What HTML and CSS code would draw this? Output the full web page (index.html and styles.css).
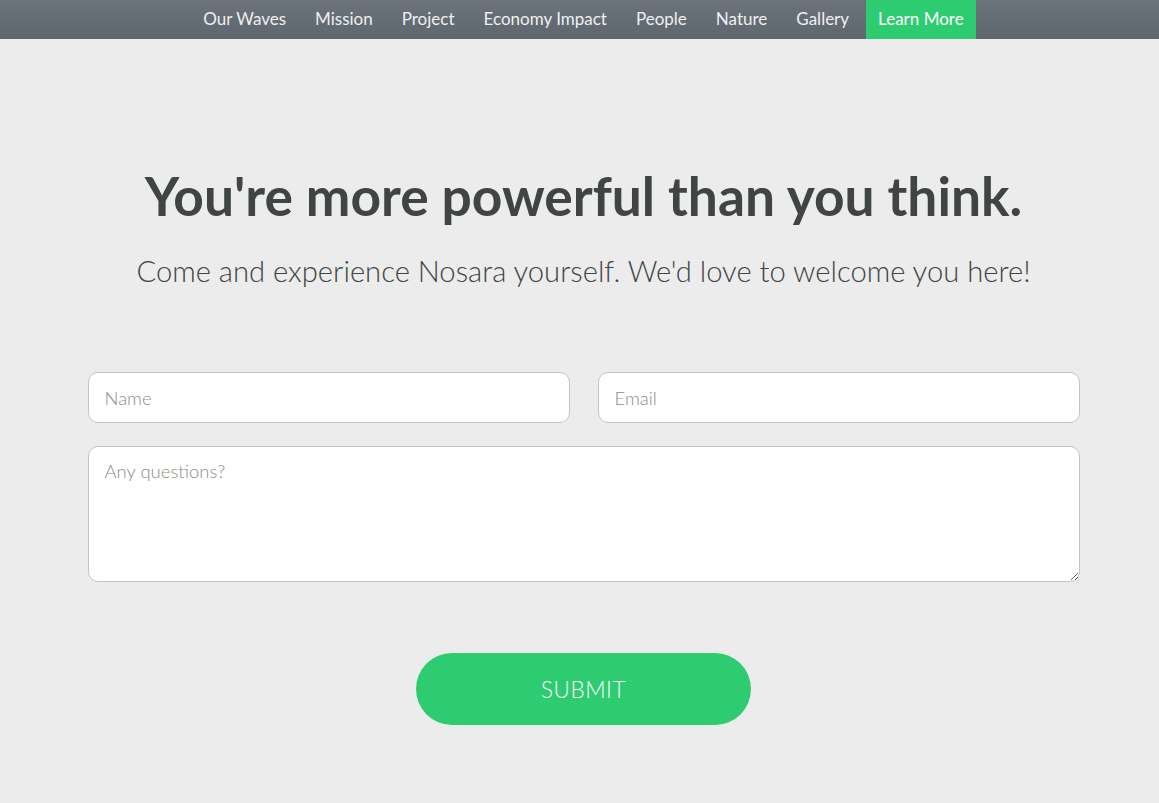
FILE: index.html
```html
<!DOCTYPE html>
<html lang="en">
<head>
<meta charset="utf-8">
<title>Nosara</title>
<link rel="stylesheet" href="styles.css">
</head>
<body>
<nav class="topnav">
  <ul class="nav-list">
    <li class="nav-item"><a href="#">Our Waves</a></li>
    <li class="nav-item"><a href="#">Mission</a></li>
    <li class="nav-item"><a href="#">Project</a></li>
    <li class="nav-item"><a href="#">Economy Impact</a></li>
    <li class="nav-item"><a href="#">People</a></li>
    <li class="nav-item"><a href="#">Nature</a></li>
    <li class="nav-item"><a href="#">Gallery</a></li>
    <li class="nav-item nav-active"><a href="#">Learn More</a></li>
  </ul>
</nav>
<main class="main">
  <section class="content">
    <h1 class="title">You're more powerful than you think.</h1>
    <p class="subtitle">Come and experience Nosara yourself. We'd love to welcome you here!</p>
    <form class="form">
      <div class="row">
        <input class="field" type="text" placeholder="Name">
        <input class="field" type="email" placeholder="Email">
      </div>
      <textarea class="field area" placeholder="Any questions?"></textarea>
      <div class="actions">
        <button class="submit" type="button">SUBMIT</button>
      </div>
    </form>
  </section>
</main>
</body>
</html>
```
FILE: styles.css
```css
html, body {
  margin: 0;
  padding: 0;
  background: #ececec;
  font-family: Lato, "Open Sans", sans-serif;
}
.topnav {
  height: 39px;
  background: linear-gradient(#6c737a, #5e666e);
}
.nav-list {
  list-style: none;
  margin: 0;
  padding: 0 0 0 8px;
  display: flex;
  justify-content: center;
  gap: 5px;
  height: 39px;
}
.nav-item a {
  display: block;
  height: 39px;
  line-height: 37px;
  padding: 0 12px;
  color: #eef0f1;
  text-decoration: none;
  font-size: 17px;
  font-weight: 400;
}
.nav-active a {
  background: #2ecc71;
  color: #ffffff;
}
.main {
  padding: 0 0 80px 8px;
}
.content {
  width: 992px;
  margin: 0 auto;
}
.title {
  margin: 0;
  padding-top: 125px;
  text-align: center;
  font-size: 53.3px;
  font-weight: 700;
  color: #404444;
  line-height: 62px;
}
.subtitle {
  margin: 28px 0 0;
  text-align: center;
  font-size: 29.2px;
  font-weight: 300;
  color: #404444;
  line-height: 34px;
}
.form {
  margin-top: 84px;
  display: flex;
  flex-direction: column;
  gap: 23px;
}
.row {
  display: flex;
  gap: 28px;
}
.field {
  box-sizing: border-box;
  flex: 1;
  height: 51px;
  border: 1px solid #c4c4c4;
  border-radius: 10px;
  background: #fff;
  padding: 0 16px;
  font-family: inherit;
  font-size: 18.5px;
  font-weight: 300;
  color: #444;
  outline: none;
}
.field::placeholder {
  color: #8f8a84;
}
.area {
  flex: none;
  height: 136px;
  padding: 13px 16px;
  resize: vertical;
}
.actions {
  display: flex;
  justify-content: center;
  margin-top: 48px;
}
.submit {
  width: 335px;
  height: 72px;
  border: none;
  border-radius: 36px;
  background: #2ecc71;
  color: #fff;
  font-family: inherit;
  font-size: 22.5px;
  font-weight: 300;
  letter-spacing: 0.5px;
  cursor: pointer;
}
```
